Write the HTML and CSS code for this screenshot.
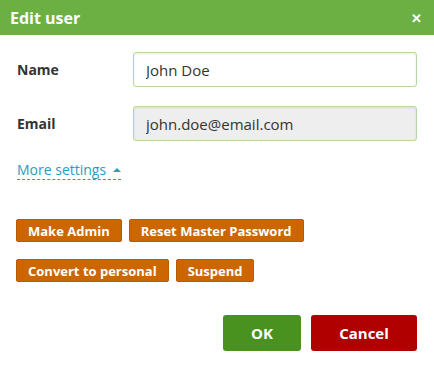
FILE: index.html
```html
<!DOCTYPE html>
<html lang="en">
<head>
  <meta charset="UTF-8" />
  <title>Edit user</title>
  <link rel="stylesheet" href="styles.css">
</head>
<body>
  <div class="dialog">
    <div class="dialog-header">
      <h1>Edit user</h1>
      <span class="dialog-close">&#x2715;</span>
    </div>

    <div class="dialog-body">
      <div class="form-row">
        <label class="form-label">Name</label>
        <input class="form-input" type="text" value="John Doe" />
      </div>
      <div class="form-row">
        <label class="form-label">Email</label>
        <input class="form-input form-input-disabled" type="text" value="john.doe@email.com" readonly />
      </div>

      <a class="more-settings">More settings <span class="caret"></span></a>

      <div class="user-actions">
        <div class="action-row">
          <button class="btn-action">Make Admin</button>
          <button class="btn-action">Reset Master Password</button>
        </div>
        <div class="action-row">
          <button class="btn-action">Convert to personal</button>
          <button class="btn-action">Suspend</button>
        </div>
      </div>
    </div>

    <div class="dialog-footer">
      <button class="btn btn-ok">OK</button>
      <button class="btn btn-cancel">Cancel</button>
    </div>
  </div>
</body>
</html>
```

FILE: styles.css
```css
* {
  box-sizing: border-box;
  margin: 0;
  padding: 0;
}

body {
  font-family: 'Open Sans', sans-serif;
  background: #ffffff;
  color: #333;
  width: 434px;
  height: 368px;
  overflow: hidden;
}

.dialog {
  display: flex;
  flex-direction: column;
  height: 368px;
}

.dialog-header {
  background-color: #6cb044;
  height: 35px;
  display: flex;
  align-items: center;
  justify-content: space-between;
  padding: 0 12px 0 10px;
  color: #fff;
}

.dialog-header h1 {
  font-size: 16px;
  font-weight: bold;
}

.dialog-close {
  font-size: 13px;
  font-weight: bold;
}

.dialog-body {
  padding: 17px 17px 0 17px;
  display: flex;
  flex-direction: column;
}

.form-row {
  display: flex;
  align-items: center;
  margin-bottom: 19px;
}

.form-label {
  width: 116px;
  font-size: 14px;
  font-weight: bold;
  color: #333;
}

.form-input {
  width: 284px;
  height: 35px;
  padding: 0 12px;
  font-family: 'Open Sans', sans-serif;
  font-size: 15px;
  color: #333;
  border: 1px solid #b5d8a0;
  border-radius: 3px;
  box-shadow: inset 0 1px 3px rgba(0, 0, 0, 0.08);
  background: #fff;
}

.form-input-disabled {
  background: #eeeeee;
}

.more-settings {
  align-self: flex-start;
  font-size: 14px;
  color: #2a9bc0;
  border-bottom: 1px dashed #2a9bc0;
  line-height: 19px;
  cursor: pointer;
}

.caret {
  display: inline-block;
  width: 0;
  height: 0;
  margin-left: 3px;
  vertical-align: 3px;
  border-left: 4px solid transparent;
  border-right: 4px solid transparent;
  border-bottom: 4px solid #2a9bc0;
}

.user-actions {
  margin-top: 39px;
  display: flex;
  flex-direction: column;
  gap: 17px;
}

.action-row {
  display: flex;
  gap: 7px;
  margin-left: -1px;
}

.btn-action {
  height: 23px;
  padding: 0 11px;
  font-family: 'Open Sans', sans-serif;
  font-size: 13px;
  font-weight: bold;
  color: #fff;
  background-color: #cc6600;
  border: 1px solid #b85c00;
  border-radius: 2px;
  cursor: pointer;
}

.dialog-footer {
  margin-top: auto;
  display: flex;
  justify-content: flex-end;
  gap: 10px;
  padding: 0 17px 17px 0;
}

.btn {
  height: 36px;
  font-family: 'Open Sans', sans-serif;
  font-size: 15px;
  font-weight: bold;
  color: #fff;
  border: none;
  border-radius: 3px;
  cursor: pointer;
}

.btn-ok {
  width: 78px;
  background-color: #4a921f;
}

.btn-cancel {
  width: 106px;
  background-color: #b00000;
}
```
